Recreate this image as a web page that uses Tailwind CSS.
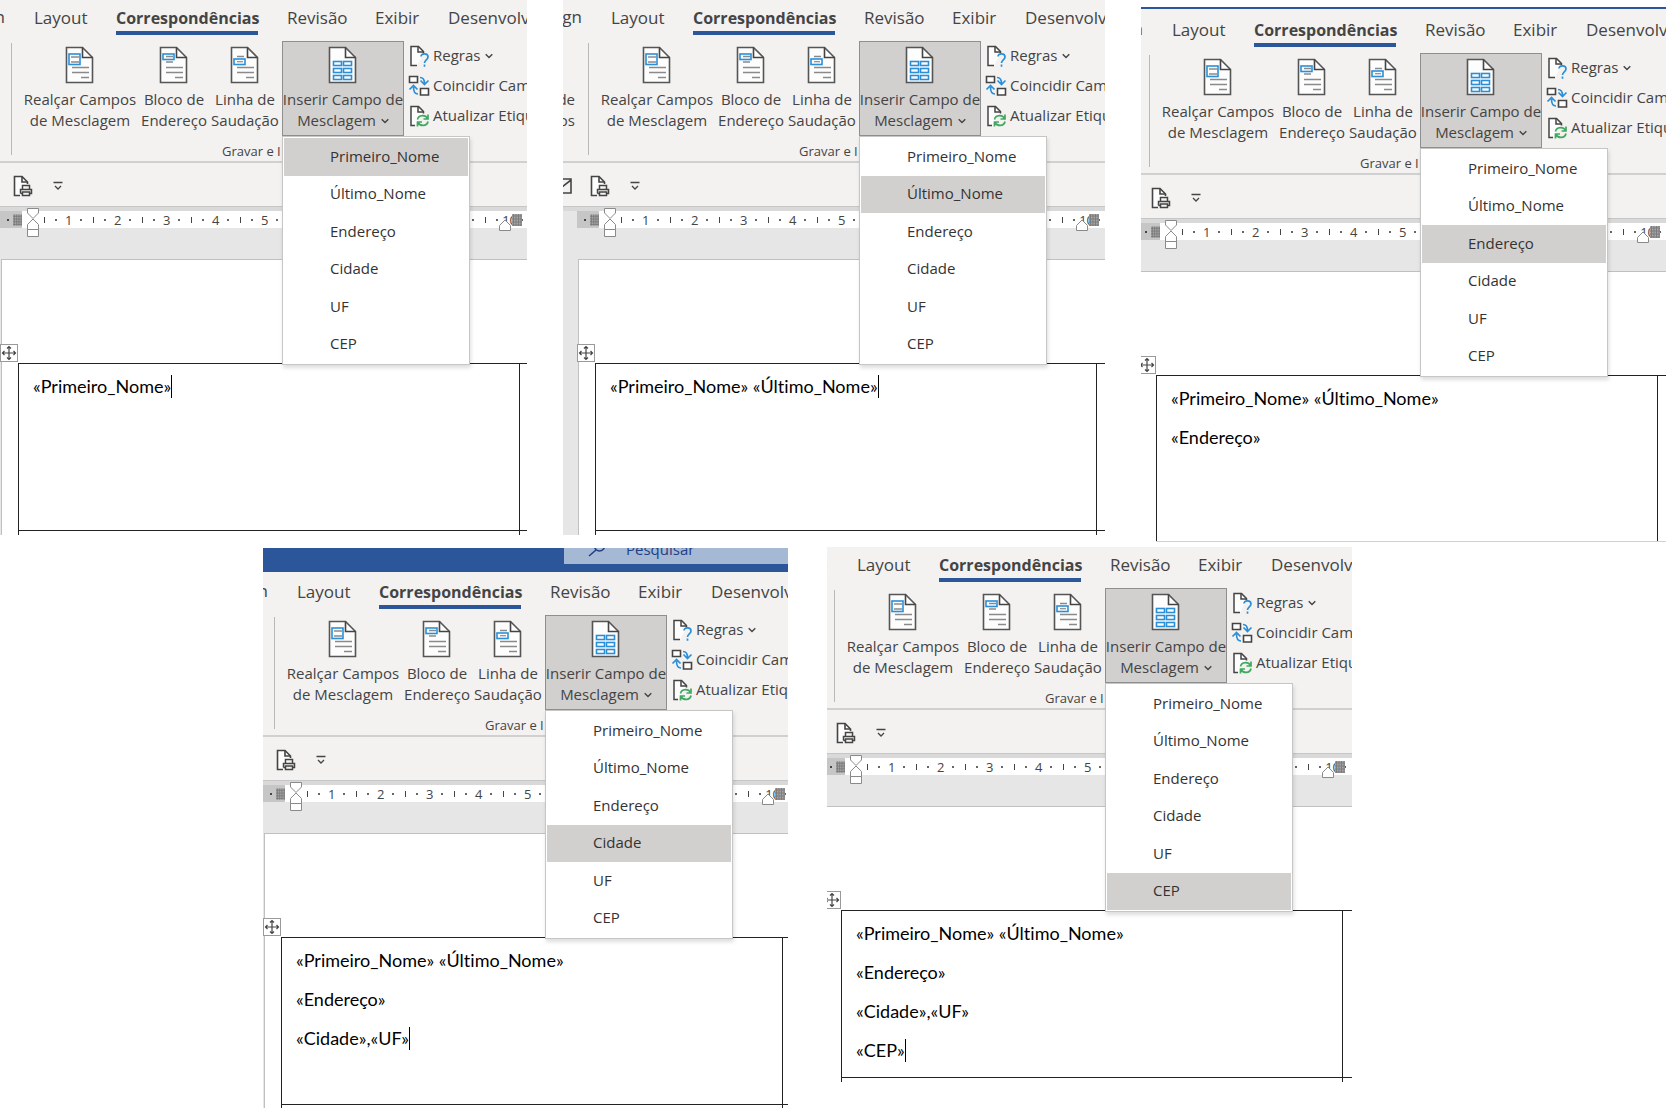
<!DOCTYPE html>
<html lang="pt-BR">
<head>
<meta charset="utf-8">
<title>Inserir campos de mesclagem</title>
<script src="https://cdn.jsdelivr.net/npm/@tailwindcss/browser@4"></script>
</head>
<body class="bg-white font-['Open_Sans','Noto_Sans',sans-serif] text-[#444444]">
<svg class="hidden" aria-hidden="true">
  <!-- blank page with folded corner, shared by the large icons -->
  <symbol id="page" viewBox="0 0 30 38">
    <path d="M2.5 1.5h16l10 10v25h-26z" fill="#fdfdfd" stroke="#555" stroke-width="1.6"/>
    <path d="M18.500 1.500v10h10" fill="none" stroke="#444" stroke-width="1.600"/>
  </symbol>
  <symbol id="highlight" viewBox="1 0 30 38">
    <use href="#page" width="30" height="38"/>
    <path d="M7 11h8M7 16h8M8 21.500h17M8 26.500h17M17 31.500h8" stroke="#8a8a8a" stroke-width="1.600"/>
    <rect x="5" y="8" width="11" height="10.500" fill="none" stroke="#2b8fd8" stroke-width="1.600"/>
  </symbol>
  <symbol id="address" viewBox="1 0 30 38">
    <use href="#page" width="30" height="38"/>
    <path d="M8 10.500h7M8 16h7M8 21.500h17M8 26.500h17M17 31.500h8" stroke="#8a8a8a" stroke-width="1.600"/>
    <rect x="5" y="8" width="11" height="5.500" fill="none" stroke="#2b8fd8" stroke-width="1.600"/>
  </symbol>
  <symbol id="greeting" viewBox="1 0 30 38">
    <use href="#page" width="30" height="38"/>
    <path d="M8 10.500h7M8 15.500h7M8 21.500h17M8 26.500h17M17 31.500h8" stroke="#8a8a8a" stroke-width="1.600"/>
    <rect x="5" y="13" width="11" height="5.500" fill="#fff" stroke="#2b8fd8" stroke-width="1.600"/>
    <path d="M8 15.700h6" stroke="#8a8a8a" stroke-width="1.200"/>
  </symbol>
  <symbol id="field" viewBox="1 0 30 38">
    <use href="#page" width="30" height="38"/>
    <g fill="#fff" stroke="#2b8fd8" stroke-width="1.600">
      <rect x="6.500" y="15.500" width="8" height="4"/><rect x="16.500" y="15.500" width="8" height="4"/>
      <rect x="6.500" y="22.500" width="8" height="4"/><rect x="16.500" y="22.500" width="8" height="4"/>
      <rect x="6.500" y="29.500" width="8" height="4"/><rect x="16.500" y="29.500" width="8" height="4"/>
    </g>
  </symbol>
  <symbol id="rules" viewBox="0 0 22 22">
    <path d="M9 20.500H3v-19h7.500l5 5v2" fill="#fdfdfd" stroke="#444" stroke-width="1.500"/>
    <path d="M10 1.500v5.500h5" fill="none" stroke="#444" stroke-width="1.500"/>
    <path d="M13 11.500c0-3.500 7-3.500 7 .5 0 2.700-3.500 3-3.500 6M16.500 19.500v2.200" fill="none" stroke="#2b8fd8" stroke-width="1.700"/>
  </symbol>
  <symbol id="match" viewBox="0 0 22 22">
    <path d="M1.500 1.500h8v6h-8zM12.500 13.500h8v6.500h-8z" fill="#fff" stroke="#444" stroke-width="1.600"/>
    <path d="M12 2.500c3 0 4.500 1.500 4.500 6M12.500 5.500l4 4 4-4M10 19c-3 0-4.500-1.500-4.500-7M1.500 14.500l4-4 4 4" fill="none" stroke="#2b8fd8" stroke-width="1.700"/>
  </symbol>
  <symbol id="update" viewBox="0 0 22 22">
    <path d="M7 20.500H3v-19h7.500l5 5v2" fill="#fdfdfd" stroke="#444" stroke-width="1.500"/>
    <path d="M10 1.500v5.500h5" fill="none" stroke="#444" stroke-width="1.500"/>
    <path d="M9.500 14.500c1-5 8-5 10-1M20 9.500v4.500h-4.500M20 16.500c-1 5-8 5-10 1M9.500 21.500V17H14" fill="none" stroke="#41a85f" stroke-width="1.700"/>
  </symbol>
  <symbol id="preview" viewBox="0 0 20 22">
    <path d="M7 20.500H1.500v-19h7.500l5.500 5.500v2" fill="#fdfdfd" stroke="#444" stroke-width="1.600"/>
    <path d="M9 1.500v5.500h5" fill="none" stroke="#444" stroke-width="1.600"/>
    <path d="M9.500 14v-3.500h7V14M7.500 18.500v-4h11v4h-2M9.500 17h7v3.500h-7zM7.500 18.500h2" fill="none" stroke="#444" stroke-width="1.500"/>
  </symbol>
  <symbol id="envelope" viewBox="0 0 20 16">
    <path d="M1 1h18v14H1zM1 2l9 7 9-7" fill="none" stroke="#444" stroke-width="1.600"/>
  </symbol>
  <symbol id="customize" viewBox="0 0 10 10">
    <path d="M.5 1.500h9M2 5l3 3 3-3" fill="none" stroke="#444" stroke-width="1.300"/>
  </symbol>
  <symbol id="chevron" viewBox="0 0 8 6">
    <path d="M.7 1.200L4 4.500l3.300-3.300" fill="none" stroke="#444" stroke-width="1.400"/>
  </symbol>
  <symbol id="move" viewBox="0 0 18 18">
    <rect x=".5" y=".5" width="17" height="17" fill="#fff" stroke="#9a9a9a"/>
    <path d="M9 2.500v13M2.500 9h13M7 4.500l2-2 2 2M7 13.500l2 2 2-2M4.500 7l-2 2 2 2M13.500 7l2 2-2 2" fill="none" stroke="#444" stroke-width="1.200"/>
  </symbol>
  <symbol id="indent" viewBox="0 0 12 30">
    <path d="M.5.500h11v4.500L6 10.500.5 5zM.5 21.500V16.500L6 11l5.500 5.500v5zM.5 21.500h11v7H.5z" fill="#fff" stroke="#8a8a8a"/>
  </symbol>
  <symbol id="right-indent" viewBox="0 0 12 12">
    <path d="M.5 11.500V6.500L6 1l5.500 5.500v5z" fill="#fff" stroke="#8a8a8a"/>
  </symbol>
  <symbol id="margin" viewBox="0 0 10 12">
    <path d="M0 0h10v12H0z" fill="#a6a6a6"/>
    <path d="M1.500 0v12M4 0v12M6.500 0v12M9 0v12M0 2h10M0 5h10M0 8h10M0 11h10" stroke="#7c7c7c"/>
  </symbol>
  <symbol id="search" viewBox="0 0 18 16">
    <path d="M1 15l7-6" stroke="#1f3f86" stroke-width="1.600"/><circle cx="11.500" cy="5" r="5" fill="none" stroke="#1f3f86" stroke-width="1.600"/>
  </symbol>
</svg>

<main id="steps" class="overflow-hidden">
  <div class="grid grid-cols-[527fr_542fr_525fr] items-start gap-x-9">
    <section data-step="0" class="min-w-0 overflow-hidden"></section>
    <section data-step="1" class="min-w-0 overflow-hidden"></section>
    <section data-step="2" class="min-w-0 overflow-hidden pt-[7px]"></section>
  </div>
  <div class="mt-[6px] grid grid-cols-[263fr_525fr_39fr_525fr_314fr] items-start">
    <section data-step="3" class="col-start-2 min-w-0 overflow-hidden"></section>
    <section data-step="4" class="col-start-4 -mt-px min-w-0 overflow-hidden"></section>
  </div>
</main>

<script>
const FIELDS = ['Primeiro_Nome', 'Último_Nome', 'Endereço', 'Cidade', 'UF', 'CEP'];
const STEPS = [
  { shift: '-ml-[30px]', active: 0, lines: ['«Primeiro_Nome»'], caret: true, next: true },
  { shift: '-ml-[16px]', active: 1, lines: ['«Primeiro_Nome» «Último_Nome»'], caret: true, next: true, lead: true },
  { shift: '-ml-[33px]', active: 2, lines: ['«Primeiro_Nome» «Último_Nome»', '«Endereço»'], top: 'line' },
  { shift: '-ml-[30px]', active: 3, lines: ['«Primeiro_Nome» «Último_Nome»', '«Endereço»', '«Cidade»,«UF»'], caret: true, next: true, top: 'title' },
  { shift: '-ml-[34px]', active: 5, lines: ['«Primeiro_Nome» «Último_Nome»', '«Endereço»', '«Cidade»,«UF»', '«CEP»'], caret: true, next: true },
];
const icon = (id, cls) => `<svg class="${cls}" aria-hidden="true"><use href="#${id}"/></svg>`;

const topBar = {
  line: `<div class="h-[5px] border-t-2 border-[#2b579a] bg-[#f3f2f1]"></div>`,
  title: `<div class="bg-[#f3f2f1] pb-[2px]"><div class="flex h-6 items-start bg-[#2b579a] pl-[301px]">
    <label class="flex h-4 flex-1 items-start overflow-hidden bg-[#a5b9d4] pl-6">${icon('search', '-mt-[7px] h-4 w-[18px] shrink-0')}
    <input type="text" placeholder="Pesquisar" aria-label="Pesquisar" class="-mt-[11px] ml-5 h-6 w-40 bg-transparent text-[15px] leading-6 placeholder:text-[#1f3f86]"></label></div></div>`,
};

const tab = (text, width) => `<button class="${width} h-[35px] shrink-0 border-b-4 border-transparent pt-[4px] text-left text-[17px] leading-7">${text}</button>`;
const command = (id, a, b, width) => `<button class="${width} flex h-[95px] shrink-0 flex-col items-center pt-[5px]">
  ${icon(id, 'h-[38px] w-[30px]')}<span class="mt-[5px] text-[15px] leading-[21px] whitespace-nowrap">${a}<br>${b}</span></button>`;
const small = (id, text) => `<button class="flex h-[30px] items-center gap-[3px] text-[15px] whitespace-nowrap">${icon(id, 'size-[22px]')}<span class="pb-px">${text}</span></button>`;

const menu = s => `<ul role="menu" class="absolute top-[95px] left-0 z-10 grid h-[229px] w-[188px] grid-rows-6 border border-[#c6c6c6] bg-white p-px shadow-[1px_3px_4px_#00000022]">
  ${FIELDS.map((f, i) => `<li class="flex"><button role="menuitem" class="${i === s.active ? 'bg-[#d2d0ce]' : 'bg-white'} flex-1 pb-[2px] pl-[46px] text-left text-[15px] text-[#333333]">${f}</button></li>`).join('')}</ul>`;

const ribbon = s => `<div class="border-b-2 border-[#d0d0d0] bg-[#f3f2f1]">
  <nav class="flex h-[35px]">
    <div class="flex w-16 shrink-0 justify-start"><span class="w-[35px] pt-[3px] text-right text-[17px] leading-7">gn</span></div>
    ${tab('Layout', 'w-[82px]')}
    <button class="mr-[29px] h-[35px] w-[142px] shrink-0 border-b-4 border-[#2b579a] pt-[4px] text-left text-base leading-7 font-bold whitespace-nowrap">Correspondências</button>
    ${tab('Revisão', 'w-[88px]')}${tab('Exibir', 'w-[73px]')}${tab('Desenvolvedor', 'w-32')}
  </nav>
  <div class="flex h-[126px] pt-[6px]">
    <div class="w-[41px] shrink-0 pt-[48px] pr-[13px] text-right text-[15px] leading-[21px]">${s.lead ? 'de<br>os' : ''}</div>
    <div class="mt-[2px] h-[112px] w-px shrink-0 bg-[#b8b8b8]"></div>
    <div class="flex shrink-0 flex-col pl-2">
      <div class="flex">
        ${command('highlight', 'Realçar Campos', 'de Mesclagem', 'w-[120px]')}
        ${command('address', 'Bloco de', 'Endereço', 'w-[68px]')}
        ${command('greeting', 'Linha de', 'Saudação', 'w-[74px]')}
        <div class="relative">
          <button aria-haspopup="menu" aria-expanded="true" class="flex h-[95px] w-[122px] flex-col items-center border border-[#8f8f8f] bg-[#d2d0ce] pt-[4px]">
            ${icon('field', 'h-[38px] w-[30px]')}<span class="mt-[5px] text-[15px] leading-[21px] whitespace-nowrap">Inserir Campo de<br>Mesclagem ${icon('chevron', 'mb-[2px] ml-px inline h-[6px] w-2')}</span></button>
          ${menu(s)}
        </div>
      </div>
      <div class="pt-[5px] pl-[202px] text-[13px] leading-5">Gravar e I</div>
    </div>
    <div class="shrink-0 pl-1">${small('rules', 'Regras ' + icon('chevron', 'mb-[2px] ml-px inline h-[6px] w-2'))}${small('match', 'Coincidir Campos')}${small('update', 'Atualizar Etiquetas')}</div>
  </div>
</div>
<div class="flex h-[43px] items-center bg-[#f3f2f1] pt-[2px] pl-[5px]">
  <div class="w-[38px] shrink-0">${s.lead ? icon('envelope', 'h-4 w-5') : ''}</div>
  <button aria-label="Visualizar impressão">${icon('preview', 'h-[22px] w-5')}</button>
  <button aria-label="Personalizar" class="ml-5">${icon('customize', 'size-[10px]')}</button>
</div>`;

// Centimetres 6 to 9 lie behind the open menu, so only their ticks are drawn.
const ruler = () => `<div class="h-[5px] border-t border-[#c6c6c6] bg-[#d9d9d9]"></div>
<div class="relative ml-[30px] flex h-[17px] items-center bg-white text-[13px] leading-[17px]">
  <div class="flex h-full w-[22px] shrink-0 items-center gap-1 bg-[#c6c6c6] pl-[7px]"><i class="size-[2px] bg-[#444444]"></i>${icon('margin', 'h-3 w-[10px]')}</div>
  <div class="w-4 shrink-0"></div>
  ${[1, 2, 3, 4, 5, '', '', '', '', 10].map(n => `<div class="grid w-[49px] shrink-0 grid-cols-4 items-center justify-items-center"><i class="h-[6px] w-px bg-[#444444]"></i><i class="size-[2px] bg-[#666666]"></i><span class="flex w-0 justify-center pt-px">${n}</span><i class="size-[2px] bg-[#666666]"></i></div>`).join('')}
  <div class="absolute -top-[3px] left-[27px]">${icon('indent', 'h-[30px] w-3')}</div>
  <div class="absolute top-[8px] left-[499px]">${icon('right-indent', 'size-3')}</div>
  <div class="absolute top-[3px] left-[512px]">${icon('margin', 'h-3 w-[10px]')}</div>
</div>`;

const doc = s => `<div class="bg-[#e6e6e6] pt-[31px] pl-[31px]">
  <div class="border-t border-l border-[#c0c0c0] bg-white pt-[84px]">
    <div class="-ml-[2px]">${icon('move', 'h-[18px] w-[18px]')}</div>
    <table class="mt-px ml-4 w-[560px] table-fixed border-collapse font-[Lato,sans-serif] text-[18px] text-black [font-variant-ligatures:none]">
      <tr><td class="${s.next ? 'h-[167px] border-b-[#222222]' : 'h-[166px] border-b-[#d0d0d0]'} w-[501px] border border-x-[#222222] border-t-[#222222] pt-[3px] pl-[14px] align-top">${s.lines.map((l, i) => `<p class="flex h-[39px] items-center whitespace-nowrap">${l}${s.caret && i === s.lines.length - 1 ? '<i class="h-[23px] w-px bg-black"></i>' : ''}</p>`).join('')}</td><td class="${s.next ? 'border-b-[#222222]' : 'border-b-[#d0d0d0]'} border border-x-[#222222] border-t-[#222222]"></td></tr>
      ${s.next ? '<tr><td class="h-1 border-x border-[#222222]"></td><td class="border-x border-[#222222]"></td></tr>' : ''}
    </table>
  </div>
</div>`;

document.querySelectorAll('[data-step]').forEach(el => {
  const s = STEPS[el.dataset.step];
  el.innerHTML = `${topBar[s.top] || ''}<div class="${s.shift} w-[640px]">${ribbon(s)}<div class="bg-[#e6e6e6]">${ruler()}</div>${doc(s)}</div>`;
});
</script>
</body>
</html>
